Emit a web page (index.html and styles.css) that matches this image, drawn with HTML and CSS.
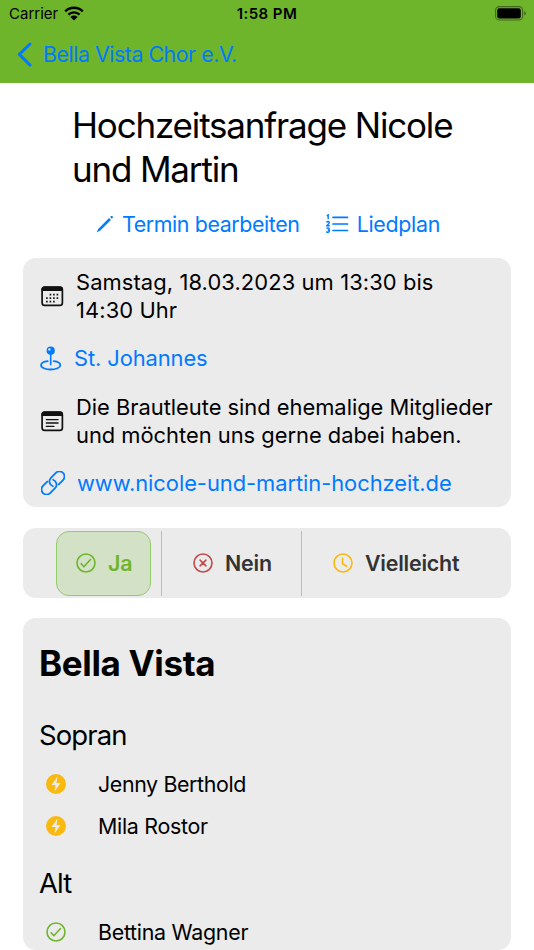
FILE: index.html
```html
<!DOCTYPE html>
<html lang="de">
<head>
<meta charset="utf-8">
<meta name="viewport" content="width=device-width">
<title>Bella Vista Chor e.V.</title>
<link rel="stylesheet" href="styles.css">
</head>
<body>
<svg class="defs" width="0" height="0" aria-hidden="true">
  <symbol id="check" viewBox="0 0 20 20"><circle cx="10" cy="10" r="9"/><path d="M5.2 10.7l2.7 3 6.6-7.2" stroke-linecap="round" stroke-linejoin="round"/></symbol>
  <symbol id="bolt" viewBox="0 0 20 20"><circle cx="10" cy="10" r="10" fill="#fab90f" stroke="none"/><path d="M11.5 2.5 5.5 11h4L8.5 17.5 14.5 9h-4z" fill="#ebebeb" stroke="none"/></symbol>
</svg>
<header class="header">
  <div class="status">
    <div class="carrier"><span>Carrier</span>
      <svg class="wifi" viewBox="0 0 20 15"><path d="M1.2 5.4a12.5 12.5 0 0 1 17.6 0M4.4 8.7a8 8 0 0 1 11.2 0" fill="none" stroke="#000" stroke-width="2.4"/><path d="M6.4 10.9a5.2 5.2 0 0 1 7.2 0L10 14.6z"/></svg>
    </div>
    <span class="time">1:58 PM</span>
    <svg class="battery" viewBox="0 0 32 15"><rect x=".6" y=".6" width="27" height="13.4" rx="3.6" fill="none" stroke="#000" stroke-opacity=".42" stroke-width="1.1"/><rect x="2.2" y="2.2" width="23.6" height="10.2" rx="2.2"/><path d="M29.2 5v4.6q1.6-.8 1.6-2.3T29.2 5z" fill-opacity=".45"/></svg>
  </div>
  <nav class="nav">
    <svg class="back" viewBox="0 0 15 25"><path d="M13 2 2.3 12.4 13 23" fill="none" stroke="#007aff" stroke-width="3" stroke-linecap="round" stroke-linejoin="round"/></svg>
    <span class="nav-title">Bella Vista Chor e.V.</span>
  </nav>
</header>
<main class="page">
  <h1 class="title"><span>Hochzeitsanfrage Nicole</span><br><span class="title-end">und Martin</span></h1>
  <div class="actions">
    <a class="action edit"><svg width="18" height="18" viewBox="0 0 18 18"><path d="M2.2 14 13.1 3.1l1.8 1.8L4 15.8 .7 17.3z" fill="#007aff"/><path d="m14.1 2.1 1-1q.8-.5 1.5.2t.2 1.5l-1 1z" fill="#007aff"/></svg><span>Termin bearbeiten</span></a>
    <a class="action plan"><svg width="23" height="20" viewBox="0 0 23 20"><path d="M7 3.4h14.5M7 10h14.5M7 16.5h14.5" stroke="#007aff" stroke-width="1.7" stroke-linecap="round"/><path d="M.8 1.8 2.2.9v4.3M.6 8.5q.3-1 1.5-1t1.3 1-2.7 3.2h3M.6 14.6q.5-.8 1.6-.7t1.1 1-1.5 1.1q1.7 0 1.7 1.1t-1.4 1.2-1.6-.8" fill="none" stroke="#007aff" stroke-width="1.4"/></svg><span>Liedplan</span></a>
  </div>
  <section class="card details">
    <div class="detail date">
      <svg width="23" height="21" viewBox="0 0 23 21"><rect x="1.1" y="1.1" width="20.3" height="18.3" rx="2.7" fill="none" stroke="#111" stroke-width="1.7"/><path d="M.5 5V3Q.5.4 3.2.4h16.1Q22 .4 22 3v2z" fill="#111"/><path d="M8.6 8.6h9.5M5.1 12.1h13M5.1 15.6h9.5" stroke="#111" stroke-width="1.6" stroke-dasharray="1.6 1.9"/></svg>
      <p><span class="d1">Samstag, 18.03.2023 um 13:30 bis</span><br><span class="d2">14:30 Uhr</span></p>
    </div>
    <div class="detail place">
      <svg width="22" height="25" viewBox="0 0 22 25"><circle cx="10.7" cy="4.7" r="4.1" fill="#007aff"/><circle cx="9.4" cy="3.4" r="1.2" fill="#ebebeb"/><path d="M9.9 8h1.6v10.2l-.8 1.6-.8-1.6z" fill="#007aff"/><path d="M7.7 15.1C3.8 15.5 1.1 17.1 1.1 19.2c0 2.4 4.2 4.3 9.6 4.3s9.6-1.9 9.6-4.3c0-2.1-2.7-3.7-6.6-4.1" fill="none" stroke="#007aff" stroke-width="1.8" stroke-linecap="round"/></svg>
      <a>St. Johannes</a>
    </div>
    <div class="detail note">
      <svg width="23" height="21" viewBox="0 0 23 21"><rect x="1.1" y="1.1" width="20.3" height="18.3" rx="2.7" fill="none" stroke="#111" stroke-width="1.7"/><path d="M.5 5V3Q.5.4 3.2.4h16.1Q22 .4 22 3v2z" fill="#111"/><path d="M5.3 8.6h11.8M5.3 12h11.8M5.3 15.4h7.6" stroke="#111" stroke-width="1.3" stroke-linecap="round"/></svg>
      <p><span class="n1">Die Brautleute sind ehemalige Mitglieder</span><br><span class="n2">und möchten uns gerne dabei haben.</span></p>
    </div>
    <div class="detail link">
      <svg width="24" height="24" viewBox="0 0 24 24" fill="none" stroke="#007aff" stroke-width="1.8" stroke-linecap="round"><g transform="rotate(-45 12 12)"><path d="M9 6.9H2.9a5.1 5.1 0 0 0 0 10.2h6.9a5.1 5.1 0 0 0 4.6-7.3"/><path d="M15 17.1h6.1a5.1 5.1 0 0 0 0-10.2h-6.9a5.1 5.1 0 0 0-4.6 7.3"/></g></svg>
      <a>www.nicole-und-martin-hochzeit.de</a>
    </div>
  </section>
  <section class="card answers">
    <button class="answer yes"><svg class="ring"><use href="#check"/></svg><span>Ja</span></button>
    <button class="answer no"><svg class="ring" viewBox="0 0 20 20"><circle cx="10" cy="10" r="9"/><path d="m7.1 7.1 5.8 5.8m0-5.8-5.8 5.8" stroke-linecap="round"/></svg><span>Nein</span></button>
    <button class="answer maybe"><svg class="ring" viewBox="0 0 20 20"><circle cx="10" cy="10" r="9"/><path d="M9.5 5v5.8l4.2 2.5" stroke-linecap="round" stroke-linejoin="round"/></svg><span>Vielleicht</span></button>
  </section>
  <section class="card members">
    <h2>Bella Vista</h2>
    <h3 class="sopran">Sopran</h3>
    <div class="member jenny"><svg class="ring"><use href="#bolt"/></svg><span>Jenny Berthold</span></div>
    <div class="member mila"><svg class="ring"><use href="#bolt"/></svg><span>Mila Rostor</span></div>
    <h3 class="alt">Alt</h3>
    <div class="member bettina"><svg class="ring"><use href="#check"/></svg><span>Bettina Wagner</span></div>
  </section>
</main>
</body>
</html>
```
FILE: styles.css
```css
* { box-sizing: border-box; }
body { margin: 0; height: 950px; overflow: hidden; background: #fff; color: #000; font-family: Inter, "Liberation Sans", sans-serif; font-size: 21.4px; line-height: 28px; }
h1, h2, h3, p { margin: 0; font-weight: 400; }
span, a { white-space: nowrap; }
svg { display: block; flex: none; }
.defs { position: absolute; }
.header { height: 83px; background: #6eb52c; }
.status { height: 28px; padding: 0 7px 0 9px; display: grid; grid-template-columns: 1fr auto 1fr; align-items: center; font-size: 15px; }
.carrier { display: flex; align-items: center; gap: 6px; }
.wifi { width: 20px; height: 15px; margin-top: -2px; }
.time { margin-left: -2px; font-weight: 600; letter-spacing: .4px; }
.battery { width: 32px; height: 15px; justify-self: end; margin-top: -2px; }
.nav { height: 53px; padding-left: 17px; display: flex; align-items: center; gap: 11px; color: #007aff; letter-spacing: -.48px; }
.nav-title { margin-top: -1px; }
.back { width: 15px; height: 25px; }
.page { padding: 20px 23px 0; }
.title { padding-left: 49px; font-size: 35px; line-height: 44px; letter-spacing: -1.18px; }
.actions { height: 66px; margin-bottom: 1px; padding: 0 71px 0 73px; display: flex; justify-content: space-between; align-items: center; color: #007aff; letter-spacing: -.41px; }
.action { display: flex; align-items: center; gap: 8px; }
.plan { letter-spacing: -.3px; }
.card { background: #ebebeb; border-radius: 13px; }
.details { height: 249px; padding: 10px 16px 0 18px; display: flex; flex-direction: column; gap: 20px; font-size: 21.9px; }
.detail { display: flex; align-items: center; gap: 12px; }
.detail a { color: #007aff; }
.date { letter-spacing: .1px; }
.place { gap: 12px; margin-left: -1px; letter-spacing: -.1px; }
.note { margin-top: 1px; letter-spacing: -.02px; }
.link { letter-spacing: -.05px; }
.answers { margin-top: 21px; height: 70px; padding-left: 33px; display: flex; align-items: center; }
.answer { height: 65px; margin: 0; padding: 0; border: 0; background: none; display: flex; align-items: center; font: 600 21.4px/28px Inter, "Liberation Sans", sans-serif; letter-spacing: -.2px; color: #333; }
.ring { width: 20px; height: 20px; fill: none; stroke: currentColor; stroke-width: 1.6; }
.yes { width: 95px; padding-left: 19px; gap: 12px; border: 1px solid #96cb6a; border-radius: 13px; background: #d3e1c6; color: #6eb52c; }
.no { width: 141px; margin-left: 10px; padding-left: 31px; gap: 12px; border: solid #bdbdbd; border-width: 0 1px; }
.no .ring { color: #c24a4d; }
.maybe { padding-left: 31px; gap: 12px; }
.maybe .ring { color: #fab90f; }
.members { margin-top: 20px; height: 332px; padding: 23px 16px 0; }
h2 { font-size: 35px; font-weight: 700; line-height: 44px; letter-spacing: -.35px; }
h3 { font-size: 27.5px; line-height: 36px; letter-spacing: -.9px; }
.sopran { margin-top: 32px; }
.member { height: 42px; padding-left: 7px; display: flex; align-items: center; gap: 32px; letter-spacing: -.28px; }
.jenny { margin-top: 10px; letter-spacing: -.38px; }
.alt { margin-top: 18px; }
.bettina { margin-top: 10px; }
.bettina .ring { color: #6eb52c; }
```
